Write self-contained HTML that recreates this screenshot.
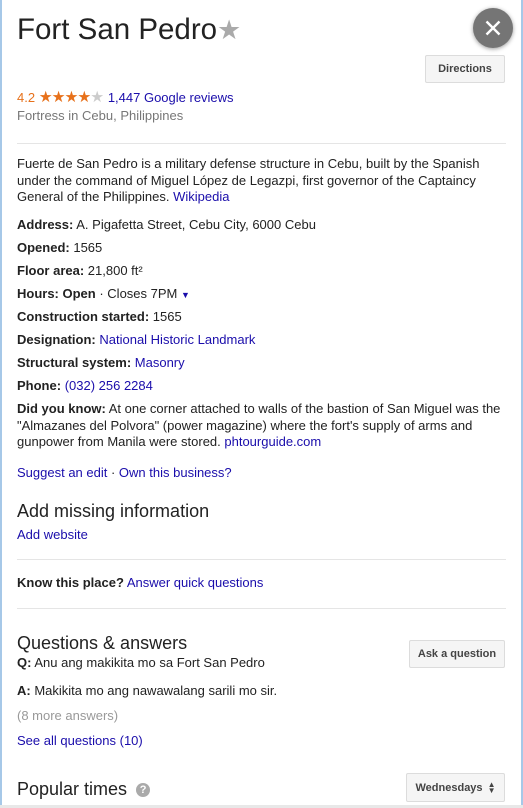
<!DOCTYPE html>
<html><head><meta charset="utf-8"><style>
*{margin:0;padding:0;box-sizing:border-box}
body{width:523px;height:808px;overflow:hidden;background:#fff;font-family:"Liberation Sans",Arial,sans-serif;font-size:13px;color:#222;position:relative}
.l{position:absolute;left:17px;white-space:nowrap;line-height:16px}
a{color:#1a0dab;text-decoration:none}
b{font-weight:bold}
.hr{position:absolute;left:17px;right:17px;height:1px;background:#e5e5e5}
.btn{position:absolute;background:#f5f5f5;border:1px solid #dcdcdc;border-radius:2px;font-size:11px;font-weight:bold;color:#444;display:flex;align-items:center;justify-content:center}
h{position:absolute;left:17px;font-size:18px;color:#222;white-space:nowrap;line-height:22px}
</style></head><body>
<div style="position:absolute;left:0;top:0;bottom:0;width:2px;background:#a6c8e8"></div>
<div style="position:absolute;right:0;top:0;bottom:0;width:2px;background:#a6c8e8"></div>
<div style="position:absolute;left:0;right:0;bottom:0;height:3px;background:#e8e8e8"></div>
<div style="position:absolute;left:17px;top:13px;font-size:29.5px;line-height:34px;color:#222">Fort San Pedro<span style="color:#aaa;font-size:27px">★</span></div>
<div style="position:absolute;left:473px;top:8px;width:40px;height:40px;border-radius:50%;background:#757575;box-shadow:0 1px 4px rgba(0,0,0,.4)"><svg width="40" height="40"><path d="M13.5 13.5L26.5 26.5M26.5 13.5L13.5 26.5" stroke="#fff" stroke-width="2.4"/></svg></div>
<div class="btn" style="left:425px;top:55px;width:80px;height:28px">Directions</div>
<div class="l" style="top:90px;font-size:13px"><span style="color:#e7711b">4.2 <span style="font-size:15.5px;letter-spacing:-1px;line-height:14px">★★★★</span><span style="color:#ccc;font-size:15.5px;line-height:14px">★</span></span> <a>1,447 Google reviews</a></div>
<div class="l" style="top:108px;color:#777">Fortress in Cebu, Philippines</div>
<div class="hr" style="top:143px"></div>
<div class="l" style="top:156px;line-height:16.5px;white-space:normal;width:495px">Fuerte de San Pedro is a military defense structure in Cebu, built by the Spanish under the command of Miguel López de Legazpi, first governor of the Captaincy General of the Philippines. <a>Wikipedia</a></div>
<div class="l" style="top:217px"><b>Address:</b> A. Pigafetta Street, Cebu City, 6000 Cebu</div>
<div class="l" style="top:240px"><b>Opened:</b> 1565</div>
<div class="l" style="top:263px"><b>Floor area:</b> 21,800 ft²</div>
<div class="l" style="top:286px"><b>Hours: Open</b> · Closes 7PM <span style="color:#1a0dab;font-size:9px">▼</span></div>
<div class="l" style="top:309px"><b>Construction started:</b> 1565</div>
<div class="l" style="top:332px"><b>Designation:</b> <a>National Historic Landmark</a></div>
<div class="l" style="top:355px"><b>Structural system:</b> <a>Masonry</a></div>
<div class="l" style="top:378px"><b>Phone:</b> <a>(032) 256 2284</a></div>
<div class="l" style="top:401px;line-height:16.5px;white-space:normal;width:495px"><b>Did you know:</b> At one corner attached to walls of the bastion of San Miguel was the "Almazanes del Polvora" (power magazine) where the fort's supply of arms and gunpower from Manila were stored. <a>phtourguide.com</a></div>
<div class="l" style="top:465px"><a>Suggest an edit</a> · <a>Own this business?</a></div>
<h style="top:500px">Add missing information</h>
<div class="l" style="top:527px"><a>Add website</a></div>
<div class="hr" style="top:559px"></div>
<div class="l" style="top:575px"><b>Know this place?</b> <a>Answer quick questions</a></div>
<div class="hr" style="top:608px"></div>
<h style="top:632px">Questions &amp; answers</h>
<div class="btn" style="left:409px;top:640px;width:96px;height:28px">Ask a question</div>
<div class="l" style="top:655px"><b>Q:</b> Anu ang makikita mo sa Fort San Pedro</div>
<div class="l" style="top:683px"><b>A:</b> Makikita mo ang nawawalang sarili mo sir.</div>
<div class="l" style="top:708px;color:#999">(8 more answers)</div>
<div class="l" style="top:733px"><a>See all questions (10)</a></div>
<h style="top:778px">Popular times <span style="display:inline-block;width:14px;height:14px;border-radius:50%;background:#aaa;color:#fff;font-size:11px;line-height:14px;text-align:center;vertical-align:2px;margin-left:4px;font-weight:bold">?</span></h>
<div class="btn" style="left:406px;top:773px;width:99px;height:29px">Wednesdays <span style="font-size:8px;margin-left:5px;line-height:6px;display:inline-block">▲<br>▼</span></div>
</body></html>
